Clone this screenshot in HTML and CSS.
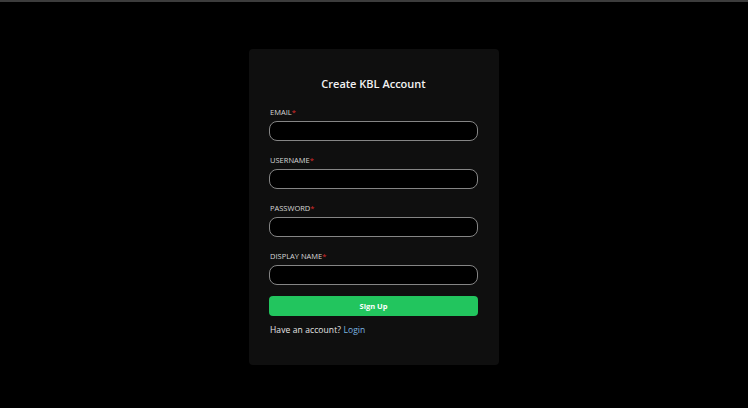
FILE: index.html
```html
<!DOCTYPE html>
<html lang="en">
<head>
<meta charset="utf-8">
<title>Create KBL Account</title>
<link rel="stylesheet" href="styles.css">
</head>
<body>
<div class="topbar"></div>
<main class="page">
  <form class="card">
    <h1 class="title">Create KBL Account</h1>
    <div class="field">
      <label class="label">EMAIL<span class="req">*</span></label>
      <input class="input" type="email">
    </div>
    <div class="field">
      <label class="label">USERNAME<span class="req">*</span></label>
      <input class="input" type="text">
    </div>
    <div class="field">
      <label class="label">PASSWORD<span class="req">*</span></label>
      <input class="input" type="password">
    </div>
    <div class="field">
      <label class="label">DISPLAY NAME<span class="req">*</span></label>
      <input class="input" type="text">
    </div>
    <button class="btn" type="button">Sign Up</button>
    <p class="foot">Have an account? <a class="link" href="#">Login</a></p>
  </form>
</main>
</body>
</html>
```

FILE: styles.css
```css
* { box-sizing: border-box; }
html, body { margin: 0; padding: 0; background: #000; height: 100%; }
body { font-family: "Open Sans", "DejaVu Sans", sans-serif; color: #e5e5e5; }
.topbar { height: 2px; background: #3c3c3c; }
.page { display: flex; justify-content: center; padding-top: 47px; }
.card {
  width: 250px;
  background: #0f0f0f;
  border-radius: 4px;
  padding: 27px 21px 30px 20px;
  display: flex;
  flex-direction: column;
}
.title {
  margin: 0 0 15px;
  text-align: center;
  font-size: 11px;
  line-height: 16px;
  font-weight: 600;
  color: #f2f2f2;
}
.field { display: flex; flex-direction: column; margin-bottom: 14px; }
.field:nth-of-type(4) { margin-bottom: 11px; }
.label {
  font-size: 7.5px;
  line-height: 10px;
  color: #d6d6d6;
  margin-bottom: 4px;
  padding-left: 1px;
}
.req { color: #d92b2b; }
.input {
  height: 20px;
  background: #000;
  border: 1px solid #858585;
  border-radius: 8px;
  outline: none;
}
.btn {
  height: 20px;
  background: #22c55e;
  border: none;
  border-radius: 4px;
  color: #fff;
  font-family: inherit;
  font-size: 7.5px;
  font-weight: 700;
  margin: 0 0 9px;
}
.foot {
  margin: 0;
  padding-left: 1px;
  font-size: 8.5px;
  letter-spacing: 0.1px;
  line-height: 10px;
  color: #e5e5e5;
}
.link { color: #7cb4e0; text-decoration: none; }
```
